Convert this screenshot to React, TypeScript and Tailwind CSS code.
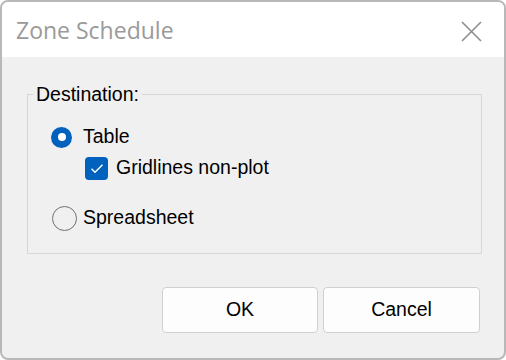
export default function App() {
  return (
    <div className="w-[506px] h-[360px] bg-white">
      <div className="w-full h-full flex flex-col rounded-lg border-2 border-[#b8b8b8] bg-[#f0f0f0] overflow-hidden font-['Liberation_Sans',Arial,sans-serif] text-black">
        {/* title bar */}
        <div className="h-[55px] shrink-0 bg-white flex items-center justify-between pl-[14px] pr-[22px]">
          <span className="text-[23px] text-[#9a9a9a] font-['Open_Sans',sans-serif] pt-[1px]">
            Zone Schedule
          </span>
          <svg width="21" height="21" viewBox="0 0 21 21" className="mt-[3px]">
            <path d="M1 1L20 20M20 1L1 20" stroke="#8c8c8c" strokeWidth="1.6" />
          </svg>
        </div>

        <div className="flex-1 flex flex-col pt-[26px] pl-[25px] pr-[22px]">
          <fieldset className="border border-[#d7d7d7] w-[455px] h-[171px] px-0">
            <legend className="ml-[5px] px-[3px] text-[19.5px] leading-[22px]">
              Destination:
            </legend>
            <div className="flex flex-col pl-[23px] pt-[19px]">
              <div className="h-[26px] flex items-center">
                <span className="w-[21px] h-[21px] rounded-full bg-[#0062bd] flex items-center justify-center">
                  <span className="w-[8px] h-[8px] rounded-full bg-white" />
                </span>
                <span className="ml-[11px] text-[19.5px]">Table</span>
              </div>
              <div className="h-[26px] mt-[5px] flex items-center pl-[34px]">
                <span className="w-[23px] h-[23px] rounded-[4px] bg-[#0062bd] flex items-center justify-center">
                  <svg width="14" height="11" viewBox="0 0 14 11">
                    <path d="M1.5 5.8L5 9.2L12.5 1.8" fill="none" stroke="white" strokeWidth="1.5" />
                  </svg>
                </span>
                <span className="ml-[8px] text-[19.5px]">Gridlines non-plot</span>
              </div>
              <div className="h-[26px] mt-[24px] flex items-center">
                <span className="w-[25px] h-[25px] ml-[1px] rounded-full border-[1.5px] border-[#707070]" />
                <span className="ml-[6px] text-[19.5px]">Spreadsheet</span>
              </div>
            </div>
          </fieldset>

          <div className="flex justify-end gap-[5px] mt-[33px] pr-[2px]">
            <button className="w-[156px] h-[46px] rounded-[4px] border border-[#d0d0d0] bg-[#fdfdfd] text-[19.5px]">
              OK
            </button>
            <button className="w-[157px] h-[46px] rounded-[4px] border border-[#d0d0d0] bg-[#fdfdfd] text-[19.5px]">
              Cancel
            </button>
          </div>
        </div>
      </div>
    </div>
  );
}
